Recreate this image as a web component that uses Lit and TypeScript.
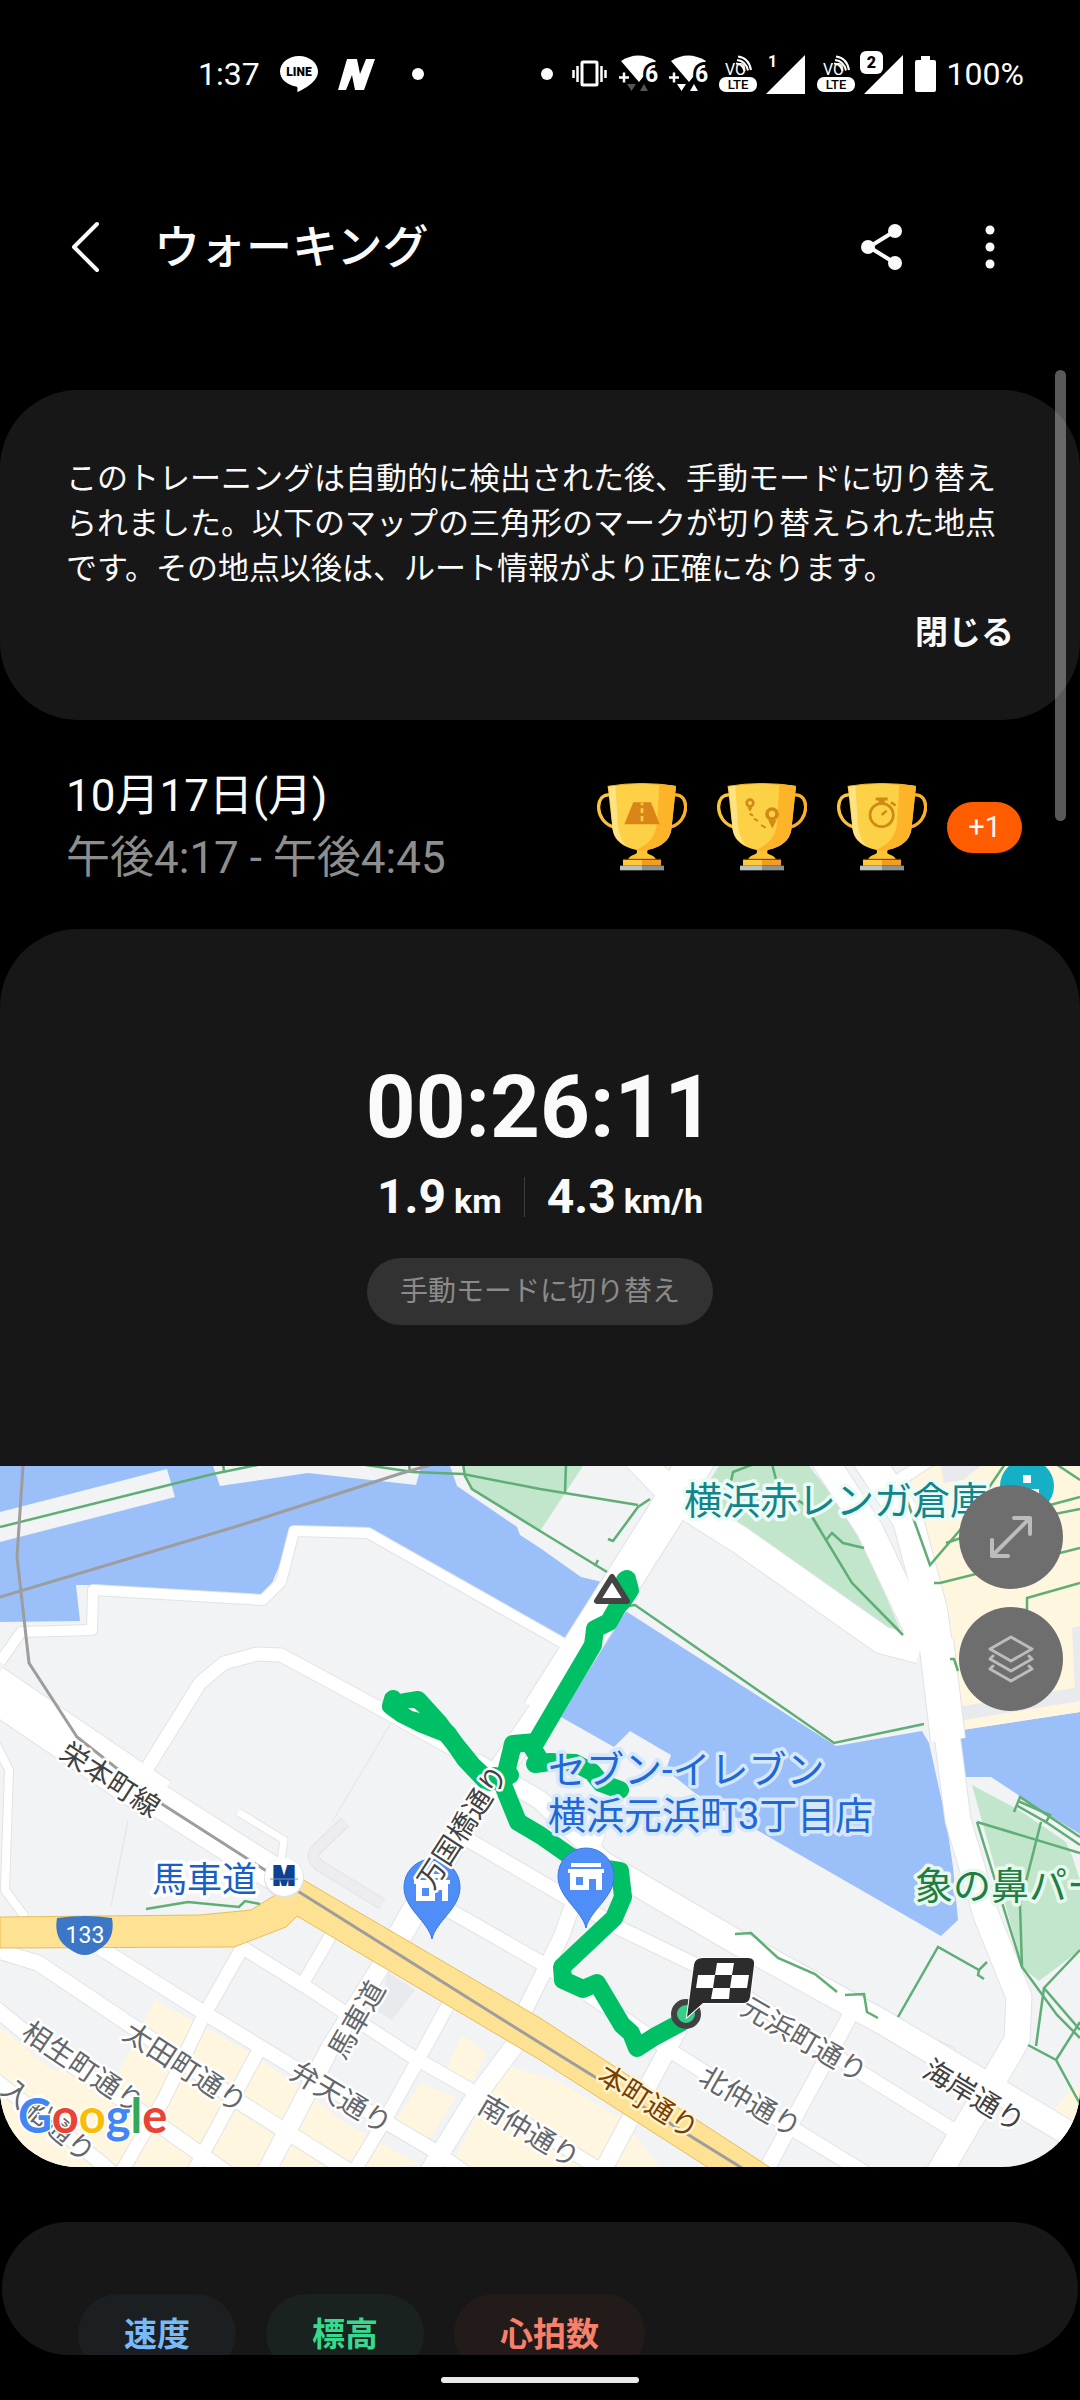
import { LitElement, html, svg, css } from "lit";
import { customElement, property } from "lit/decorators.js";

const JP = css`Roboto, "Noto Sans CJK JP", sans-serif`;

/* ---------- Status bar ---------- */

@customElement("status-bar")
class StatusBar extends LitElement {
  static styles = css`
    :host {
      display: block;
      font-family: ${JP};
      color: #fff;
    }
    .bar {
      display: flex;
      justify-content: space-between;
      align-items: center;
      height: 148px;
      padding: 0 56px 0 198px;
      font-size: 32px;
      line-height: 40px;
    }
    .group {
      display: flex;
      align-items: center;
      gap: 11px;
    }
    .left {
      gap: 20px;
    }
    .dot {
      width: 12px;
      height: 12px;
      border-radius: 50%;
      background: #fff;
      margin: 0 8px;
    }
    .left .dot {
      margin-left: 16px;
    }
    .signal {
      margin-left: -6px;
    }
    svg {
      display: block;
      font-family: Roboto, sans-serif;
    }
  `;

  private wifi(active: boolean) {
    const arrow = active ? "#fff" : "#555";
    return html`<svg width="39" height="38" viewBox="0 0 39 38" aria-hidden="true">
      <path d="M2 6Q19-5 37 6L20 27Z" fill="#fff" />
      <text x="26" y="27" font-size="23" font-weight="700" fill="#fff" stroke="#000" stroke-width="6" paint-order="stroke">6</text>
      <path d="M0 22.500h10M5 17.500v10" stroke="#fff" stroke-width="2.500" />
      <path d="M8 29h9l-4.500 7zM25 29l4 7h-8z" fill="${arrow}" stroke="#000" stroke-width="1" paint-order="stroke" />
    </svg>`;
  }

  private volte() {
    return html`<svg width="38" height="38" viewBox="0 0 38 38" aria-hidden="true">
      <text x="6" y="20" font-size="16" fill="#fff">VO</text>
      <g fill="none" stroke="#fff" stroke-width="2">
        <path d="M17 8.500Q24 9 25.500 16" />
        <path d="M18 5Q27 6 29 15.500" />
        <path d="M19 1.500Q30 3 32 15" />
      </g>
      <rect y="22" width="38" height="15" rx="7" fill="#fff" />
      <text x="19" y="34" font-size="13" font-weight="500" text-anchor="middle">LTE</text>
    </svg>`;
  }

  private signal(sim: number) {
    return html`<svg class="signal" width="44" height="48" viewBox="0 0 44 48" aria-hidden="true">
      <path d="M4 44H43V5Z" fill="#fff" />
      ${sim === 1
        ? svg`<text x="6" y="17" font-size="16" font-weight="700" fill="#fff">1</text>`
        : svg`<rect x="0" y="1" width="23" height="23" rx="6" fill="#fff" stroke="#000" stroke-width="3" paint-order="stroke" />
            <text x="11.500" y="18" font-size="16" font-weight="900" text-anchor="middle">2</text>`}
    </svg>`;
  }

  render() {
    return html`<div class="bar">
      <div class="group left">
        <span>1:37</span>
        <svg width="38" height="38" viewBox="0 0 38 38" aria-hidden="true">
          <path d="M19 1C8.500 1 0 8 0 16.500C0 24 7 30 16 31.500C18.500 32 17 35 17.500 37C24 34 38 27 38 16.500C38 8 29.500 1 19 1Z" fill="#fff" />
          <text x="19" y="21" font-size="12" font-weight="900" text-anchor="middle">LINE</text>
        </svg>
        <svg width="38" height="38" viewBox="0 0 38 38" aria-hidden="true">
          <path d="M9 4H19L22 19L28 4H37L26 35H17L14 20L8 35H0Z" fill="#fff" />
        </svg>
        <span class="dot"></span>
      </div>
      <div class="group">
        <span class="dot"></span>
        <svg width="36" height="28" viewBox="0 0 36 28" aria-hidden="true">
          <rect x="10" y="2" width="15" height="23" rx="1" fill="none" stroke="#fff" stroke-width="3" />
          <path d="M1.500 10v8M5.500 6v16M29.500 6v16M33.500 10v8" stroke="#fff" stroke-width="2.500" />
        </svg>
        ${this.wifi(false)} ${this.wifi(true)} ${this.volte()} ${this.signal(1)} ${this.volte()} ${this.signal(2)}
        <svg width="21" height="38" viewBox="0 0 21 38" aria-hidden="true">
          <path d="M6 1h9v4h4q2 0 2 2v28q0 2-2 2H2q-2 0-2-2V7q0-2 2-2h4z" fill="#fff" />
        </svg>
        <span>100%</span>
      </div>
    </div>`;
  }
}

/* ---------- Trophy ---------- */

const TROPHY_MARKS = {
  road: svg`
    <path d="M217 180H270L296 246H190Z" fill="#d98518" />
    <path d="M243 181v8M243 198v14M243 221v16" stroke="#fdd042" stroke-width="8" />`,
  route: svg`
    <g fill="none" stroke="#d08a17">
      <circle cx="207" cy="182" r="10" stroke-width="8" />
      <path d="M207 206l-5-10h10z" stroke-width="3" fill="#d08a17" />
      <circle cx="273" cy="215" r="15" stroke-width="11" />
      <path d="M274 254l-9-18h18z" stroke-width="4" fill="#d08a17" />
      <path d="M206 214l10 6M219 229l12 7M240 248l14 8" stroke-width="6" />
    </g>`,
  time: svg`
    <g fill="none" stroke="#cf8a15">
      <circle cx="242" cy="218" r="35" stroke-width="8" />
      <path d="M224 170h36" stroke-width="9" />
      <path d="M242 170v14" stroke-width="18" />
      <path d="M270 180l14 9" stroke-width="8" />
      <path d="M242 218l15-13" stroke-width="7" />
    </g>`,
};

@customElement("trophy-icon")
class TrophyIcon extends LitElement {
  @property() mark: keyof typeof TROPHY_MARKS = "road";

  static styles = css`
    :host {
      display: block;
    }
    svg {
      display: block;
    }
  `;

  render() {
    return html`<svg width="90" height="88" viewBox="108 122 270 264" aria-hidden="true">
      <path d="M148 158C101 150 98 236 158 254" fill="none" stroke="#fbc33a" stroke-width="10" />
      <path d="M339 158C386 150 388 236 330 254" fill="none" stroke="#fbb02c" stroke-width="10" />
      <path d="M226 321H262Q254 332 264 336Q280 341 285 351H201Q206 341 222 336Q232 332 226 321Z" fill="#fcc235" />
      <path d="M140 132Q243 115 345 132L331 262Q324 308 262 322Q254 326 243 326Q232 326 224 322Q162 308 155 262Z" fill="#fdd146" />
      <path d="M295 125Q325 127 345 132L331 262Q324 308 262 322Q254 326 243 326Q232 326 226 322Q284 300 288 240Z" fill="#fdb429" />
      <path d="M144 132L163 130L171 250Q176 290 196 311Q160 292 155 262Z" fill="#fee385" />
      <path d="M140 132Q243 115 345 132" fill="none" stroke="#f3b52e" stroke-width="3" />
      <path d="M186 353H243V370H186Z" fill="#fdca3c" />
      <path d="M243 353H300V370H243Z" fill="#f29c24" />
      <path d="M186 351H300" stroke="#8a4d0c" stroke-width="3" />
      <path d="M177 370H243V384H177Z" fill="#b9bfba" />
      <path d="M243 370H309V384H243Z" fill="#8d9190" />
      ${TROPHY_MARKS[this.mark]}
    </svg>`;
  }
}

/* ---------- Route map ---------- */

type Road = [points: string, width: number];

const ROADS: Road[] = [
  ["0,1662 21,1632 92,1630 93,1590 263,1600 281,1582 294,1531 368,1533 575,1650", 10],
  ["143,1775 200,1683 224,1663 257,1654 281,1655 379,1708 480,1764", 13],
  ["475,1762 540,1800 609,1866 733,1938", 18],
  ["600,1862 733,1940 884,2023 1090,2146", 24],
  ["-10,1686 158,1800", 44],
  ["150,1795 290,1884", 32],
  ["-4,1744 9,1770 5,1890 25,1917", 8],
  ["238,1812 284,1840 278,1880", 7],
  ["100,1948 203,2012 293,2067 430,2148 470,2176", 14],
  ["238,1945 306,1987 413,2057 480,2095 620,2182", 13],
  ["-5,1950 38,1963 138,2030 241,2103 360,2178", 15],
  ["-5,2008 28,2035 138,2110 240,2182", 15],
  ["-5,2080 100,2162 120,2180", 14],
  ["241,1950 203,2017 165,2097 118,2178", 13],
  ["331,1935 302,1985", 12],
  ["259,2050 205,2150 190,2178", 13],
  ["452,1998 418,2060 385,2120 350,2178", 13],
  ["520,2038 470,2105 425,2178", 18],
  ["680,2026 602,2172", 17],
  ["852,2012 765,2172", 15],
  ["465,1838 623,1930 702,1968 860,2072 953,2130", 14],
  ["440,1905 545,1965 674,2053 795,2130 870,2176", 14],
  ["598,1832 562,1935 522,2016", 15],
  ["620,1440 680,1502 740,1540 882,1640 920,1650", 27],
  ["893,1484 936,1456", 12],
  ["822,1456 870,1530 922,1640", 26],
  ["866,1456 908,1520 932,1610 945,1700", 30],
  ["936,1640 948,1740", 34],
  ["946,1727 958,1820 986,1915 1019,1997 1017,2040 936,2178", 25],
  ["730,1400 664,1516 540,1712", 36],
  ["548,1700 470,1815 400,1935", 24],
  ["402,1932 330,2048 262,2180", 18],
];

const FOOTPATHS = [
  "0,1527 213,1474 262,1464",
  "223,1464 224,1471",
  "409,1464 410,1472",
  "366,1465 413,1472 463,1474 540,1489 638,1505",
  "650,1499 638,1507 613,1541 608,1539",
  "566,1464 565,1493",
  "463,1464 465,1476 472,1489 540,1531 607,1572",
  "595,1566 598,1560",
  "628,1606 635,1605 834,1743 924,1724",
  "772,1464 778,1487 805,1505 826,1540 852,1583 903,1635",
  "805,1505 820,1530",
  "826,1540 832,1533 843,1543 864,1548",
  "731,1482 733,1472 754,1464",
  "906,1497 915,1523 930,1565 960,1530 1005,1464",
  "934,1583 940,1583 1080,1548",
  "1027,1612 1027,1598 1080,1583",
  "946,1543 1000,1525 1080,1509",
  "1050,1505 1080,1497",
  "1056,1464 1080,1480",
  "950,1659 954,1659 958,1671",
  "735,1934 751,1933 778,1958 815,1974 837,1992",
  "845,1995 864,1994 867,2012 878,2018",
  "898,2017 938,1947 979,1970 987,1962",
  "979,1970 978,1975 984,1979",
  "977,1822 1022,1967 1057,2015 1080,2038",
  "1018,1870 1020,1905 1022,1967",
  "977,1822 1080,1853",
  "1041,1822 1020,1905",
  "1080,1950 1044,1988 1080,2030",
  "1044,1988 1036,2046",
  "1028,2045 1056,2060 1080,2104",
  "1056,2060 1080,2022",
  "1014,1812 1020,1797 1080,1837",
  "1018,1801 1050,1815 1046,1822 1016,1805",
  "1043,1820 1080,1845",
  "146,1909 188,1902 239,1907 245,1901 260,1904",
];

interface StreetLabel {
  text: string;
  x: number;
  y: number;
  angle: number;
  tone?: "dark" | "brown";
}

const STREET_LABELS: StreetLabel[] = [
  { text: "栄本町線", x: 110, y: 1780, angle: 33, tone: "dark" },
  { text: "万国橋通り", x: 463, y: 1827, angle: -57, tone: "dark" },
  { text: "馬車道", x: 357, y: 2020, angle: -60 },
  { text: "相生町通り", x: 83, y: 2068, angle: 34 },
  { text: "太田町通り", x: 185, y: 2068, angle: 33 },
  { text: "弁天通り", x: 341, y: 2098, angle: 31 },
  { text: "南仲通り", x: 529, y: 2132, angle: 31 },
  { text: "入船通り", x: 48, y: 2121, angle: 40 },
  { text: "本町通り", x: 648, y: 2102, angle: 32, tone: "brown" },
  { text: "北仲通り", x: 750, y: 2102, angle: 30 },
  { text: "元浜町通り", x: 804, y: 2040, angle: 30 },
  { text: "海岸通り", x: 974, y: 2096, angle: 31, tone: "dark" },
];

const GOOGLE = [
  ["G", "#4285f4"],
  ["o", "#ea4335"],
  ["o", "#fbbc05"],
  ["g", "#4285f4"],
  ["l", "#34a853"],
  ["e", "#ea4335"],
];

@customElement("route-map")
class RouteMap extends LitElement {
  static styles = css`
    :host {
      display: block;
      position: relative;
    }
    .map {
      display: block;
      width: 100%;
      height: auto;
      background: #f1f3f4;
      font-family: ${JP};
    }
    .water {
      fill: #9bbff9;
    }
    .land {
      fill: #f1f3f4;
    }
    .park {
      fill: #c1e6cb;
    }
    .cream {
      fill: #fef6df;
    }
    .grey {
      fill: #e9eaee;
    }
    .casing,
    .road {
      fill: none;
      stroke: #fff;
      stroke-linejoin: round;
    }
    .casing {
      stroke: #e1e3e6;
    }
    .foot {
      fill: none;
      stroke: #5fae76;
      stroke-width: 2.5;
    }
    .rail {
      fill: none;
      stroke: #9d9d9d;
      stroke-width: 3;
    }
    .route {
      fill: none;
      stroke: #00c065;
      stroke-width: 18;
      stroke-linejoin: round;
      stroke-linecap: round;
    }
    .label {
      font-size: 28px;
      fill: #63676c;
      stroke: #fff;
      stroke-width: 5px;
      stroke-linejoin: round;
      paint-order: stroke;
      text-anchor: middle;
      dominant-baseline: central;
    }
    .dark {
      fill: #414141;
    }
    .brown {
      fill: #793e00;
      stroke: #fff3d0;
    }
    .poi {
      font-size: 38px;
      stroke: #fff;
      stroke-width: 7px;
      stroke-linejoin: round;
      paint-order: stroke;
    }
    .shop {
      fill: #2068d8;
      stroke: #d5e7fb;
    }
    .station {
      font-size: 35px;
      fill: #1b5fc6;
    }
    .sight {
      fill: #12858b;
      stroke: #ecfbf5;
    }
    .garden {
      fill: #1d7f45;
      stroke: #e9f8ee;
    }
    .google {
      font-family: Lato, sans-serif;
      font-weight: 700;
      font-size: 47px;
      stroke: #fff;
      stroke-width: 3px;
      paint-order: stroke;
    }
    .controls {
      position: absolute;
      top: 19px;
      right: 17px;
      display: flex;
      flex-direction: column;
      gap: 18px;
    }
    .control {
      display: grid;
      place-items: center;
      width: 104px;
      height: 104px;
      padding: 0;
      border: 0;
      border-radius: 50%;
      background: #6e6e6e;
      color: #bcbcbc;
    }
  `;

  private pin(x: number, y: number) {
    return svg`<g transform="translate(${x} ${y})">
      <path d="M0 52C-4 34-28 22-28 0A28 28 0 0 1 28 0C28 22 4 34 0 52Z" fill="#4f8ef7" stroke="#3b78e0" stroke-width="1" />
      <path d="M-15-11H15M-18-5H18" stroke="#fff" stroke-width="4" />
      <path d="M-16-5H16V14H10V3H3V14H-16ZM-10 1V9H-3V1Z" fill="#fff" fill-rule="evenodd" />
    </g>`;
  }

  render() {
    return html`
      <svg class="map" viewBox="0 1466 1080 701" role="img" aria-label="ルートマップ">
        <polygon class="water" points="0,1466 450,1466 457,1486 517,1527 520,1535 540,1548 581,1577 602,1582 566,1642 370,1528 296,1526 269,1590 262,1595 93,1585 76,1585 80,1621 0,1622" />
        <polygon class="land" points="0,1512 167,1469 175,1497 0,1542" />
        <polygon class="land" points="213,1466 421,1466 416,1485 308,1473 220,1486" />
        <polygon class="park" points="463,1466 465,1476 472,1489 540,1531 583,1466" />
        <polygon class="water" points="624,1610 836,1746 922,1731 929,1743 946,1820 953,1867 958,1920 941,1936 757,1830 695,1793 666,1770 671,1755 630,1731 614,1747 561,1717" />
        <polygon class="water" points="955,1731 1080,1712 1080,1834 1052,1817 991,1777 955,1777" />
        <polygon class="park" points="972,1785 1019,1810 1066,1842 1072,1856 1080,1880 1080,1950 1039,1981 1023,1968" />
        <polygon class="cream" points="898,1480 925,1466 1080,1466 1080,1712 962,1730 930,1558 905,1500" />
        <polygon class="grey" points="941,1466 981,1466 963,1480 944,1483" />
        <polygon class="grey" points="957,1707 1080,1687 1080,1701 958,1721" />
        <polygon class="grey" points="1072,1628 1080,1626 1080,1690 1075,1690" />
        <polygon class="park" points="719,1466 809,1466 857,1527 903,1637 888,1635 733,1530 690,1510" />
        <polygon class="cream" points="654,1466 681,1466 674,1478" />
        <polygon class="cream" points="0,2027 52,2070 118,2073 130,2050 155,2000 192,2020 250,2053 290,2080 320,2103 400,2167 0,2167" />
        <polygon class="cream" points="462,2035 487,2053 472,2083 446,2070" />
        <polygon class="cream" points="420,2083 456,2097 427,2143 393,2125" />
        <polygon class="cream" points="310,2103 420,2165 290,2167" />
        <polygon class="cream" points="503,2064 560,2082 623,2120 660,2167 450,2167" />
        <polygon class="cream" points="1067,2095 1080,2085 1080,2125 1050,2115" />
        <polygon class="grey" points="388,1972 415,1990 400,2010 392,2020 378,2012" />

        <path class="casing" d="M345 1822L316 1850Q310 1858 320 1866L382 1904" stroke-width="12" />
        <path d="M345 1822L316 1850Q310 1858 320 1866L382 1904" fill="none" stroke="#ededf0" stroke-width="10" />
        <path class="casing" d="M391 1723L332 1822M128 1820L111 1906M913 2038L920 2032L955 2048L954 2060" />

        ${ROADS.map(([p, w]) => svg`<polyline class="casing" points=${p} stroke-width=${w + 2} />`)}
        ${ROADS.map(([p, w]) => svg`<polyline class="road" points=${p} stroke-width=${w} />`)}

        <polygon points="0,1917 200,1915 251,1910 272,1897 300,1878 540,2018 774,2170 712,2170 540,2060 297,1916 286,1927 234,1947 0,1948" fill="#fde293" stroke="#e9bd5a" stroke-width="1" />
        ${FOOTPATHS.map((p) => svg`<polyline class="foot" points=${p} />`)}
        <polyline class="rail" points="23,1466 17,1557 21,1592 29,1663 77,1737 162,1804 296,1890 540,2043 742,2168" />
        <polyline class="rail" points="0,1597 241,1525 399,1474 430,1465" />

        <polyline class="route" points="625,1580 629,1590 618,1606 609,1622 595,1629 593,1645 543,1730 536,1742 513,1744 503,1785 518,1822 540,1835 570,1856 600,1868 620,1871 623,1897 614,1918 562,1967 563,1980 583,1989 597,1983 622,2025 631,2033 637,2048 654,2037 682,2022" />
        <polyline class="route" points="627,1579 630,1590 622,1602" stroke-width="20" />
        <polyline class="route" points="393,1699 391,1706 402,1714 420,1723 448,1734 465,1759 485,1780 495,1776" />
        <polyline class="route" points="394,1704 418,1700 438,1722 450,1738 472,1765 490,1782 510,1775" />
        <polyline class="route" points="530,1744 540,1760 535,1764 550,1762 575,1763 592,1772 601,1783 620,1790" />
        <polygon points="408,1708 414,1708 420,1713 412,1711" fill="#fff" />

        ${this.pin(432, 1887)} ${this.pin(586, 1876)}
        ${STREET_LABELS.map(
          (l) => svg`<text class="label ${l.tone ?? ""}" transform="translate(${l.x} ${l.y}) rotate(${l.angle})">${l.text}</text>`,
        )}

        <circle cx="1027" cy="1486" r="27" fill="#16b0c6" />
        <path d="M1023 1475h8v8h-8zM1013 1489h26v5h-26z" fill="#fff" />
        <text class="poi sight" x="684" y="1514">横浜赤レンガ倉庫</text>
        <text class="poi shop" x="548" y="1783">セブン-イレブン</text>
        <text class="poi shop" x="548" y="1829">横浜元浜町3丁目店</text>
        <text class="poi garden" x="915" y="1899">象の鼻パーク</text>
        <circle cx="284" cy="1878" r="20" fill="#dfe1e4" />
        <circle cx="284" cy="1877" r="19" fill="#fff" />
        <text x="284" y="1885" text-anchor="middle" font-weight="900" font-size="25" fill="#0c4290" stroke="#0c4290" stroke-width="2">M</text>
        <path d="M270 1879h28" stroke="#6c93cc" stroke-width="1" />
        <text class="poi station" x="152" y="1892">馬車道</text>

        <path d="M57 1918Q85 1914 112 1918Q116 1940 98 1950Q85 1960 71 1950Q53 1940 57 1918Z" fill="#3b77c6" />
        <text x="85" y="1943" text-anchor="middle" font-size="23" fill="#fff">133</text>

        <polygon points="612,1577 597,1601 627,1601" fill="#fff" stroke="#444" stroke-width="6" stroke-linejoin="round" />
        <circle cx="686" cy="2014" r="12" fill="#36cf8a" stroke="#424242" stroke-width="6" />
        <path d="M703 1958H748Q755 1958 754 1965L750 1997Q749 2003 743 2003H703L687 2017L694 1965Q695 1958 703 1958Z" fill="#2c2c2c" stroke="#fff" stroke-width="2" paint-order="stroke" />
        <path d="M717 1963H734L732 1975H749L747 1988H730L729 1999H711L713 1988H696L698 1975H715ZM715 1975L713 1988H730L732 1975Z" fill="#fff" fill-rule="evenodd" />

        <text class="google" x="18" y="2133">${GOOGLE.map(([c, fill]) => svg`<tspan fill=${fill}>${c}</tspan>`)}</text>
      </svg>
      <div class="controls">
        <button class="control" aria-label="拡大">
          <svg width="44" height="44" viewBox="0 0 44 44" fill="none" stroke="currentColor" stroke-width="4" stroke-linecap="round" stroke-linejoin="round">
            <path d="M4 40L40 4M25 3H41V19M3 25V41H19" />
          </svg>
        </button>
        <button class="control" aria-label="レイヤー">
          <svg width="48" height="48" viewBox="0 0 48 48" fill="none" stroke="currentColor" stroke-width="3" stroke-linejoin="round" stroke-linecap="round">
            <path d="M24 2L45 14L24 26L3 14Z" />
            <path d="M6 21L3 24L24 36L45 24L42 21M6 31L3 34L24 46L45 34L42 31" />
          </svg>
        </button>
      </div>
    `;
  }
}

/* ---------- Page ---------- */

@customElement("app-root")
class AppRoot extends LitElement {
  static styles = css`
    :host {
      display: flex;
      flex-direction: column;
      position: relative;
      height: 100vh;
      overflow: hidden;
      background: #000;
      color: #fafafa;
      font-family: ${JP};
    }
    * {
      box-sizing: border-box;
    }
    button {
      font: inherit;
      color: inherit;
      border: 0;
      padding: 0;
      background: none;
    }
    svg {
      display: block;
    }
    h1,
    p {
      margin: 0;
      font-weight: inherit;
    }
    .header {
      display: flex;
      align-items: center;
      height: 198px;
      padding: 0 64px 0 60px;
    }
    .icon {
      display: grid;
      place-items: center;
      width: 52px;
      height: 60px;
    }
    .title {
      flex: 1;
      padding-left: 42px;
      font-size: 46px;
      line-height: 60px;
      font-weight: 500;
    }
    .actions {
      display: flex;
      gap: 56px;
    }
    .content {
      display: flex;
      flex: 1;
      flex-direction: column;
      min-height: 0;
      padding-top: 44px;
    }
    .card {
      flex: none;
      border-radius: 78px;
      background: #171717;
      overflow: hidden;
    }
    .notice {
      display: flex;
      flex-direction: column;
      gap: 18px;
      padding: 66px 66px 63px;
      font-size: 31px;
      line-height: 45px;
    }
    .close {
      align-self: flex-end;
      font-size: 33px;
      font-weight: 700;
      line-height: 48px;
    }
    .summary {
      display: flex;
      flex: none;
      justify-content: space-between;
      align-items: center;
      padding: 45px 58px 40px 66px;
      font-size: 44px;
      line-height: 62px;
    }
    .time {
      color: #8e8e8e;
    }
    .awards {
      display: flex;
      align-items: center;
      gap: 20px;
    }
    .trophies {
      display: flex;
      gap: 30px;
    }
    .more {
      padding: 0 21px;
      border-radius: 26px;
      background: #ff5c00;
      font-size: 29px;
      line-height: 51px;
    }
    .result {
      display: flex;
      flex-direction: column;
      align-items: center;
      padding: 126px 0 141px;
      font-weight: 700;
    }
    .duration {
      font-size: 87px;
      line-height: 104px;
    }
    .stats {
      display: flex;
      align-items: center;
      gap: 22px;
      padding: 8px 0 31px;
      font-size: 48px;
      line-height: 60px;
    }
    .stat {
      display: flex;
      align-items: baseline;
      gap: 8px;
    }
    .unit {
      font-size: 34px;
      line-height: 40px;
    }
    .divider {
      width: 1px;
      height: 40px;
      background: #3c3c3c;
    }
    .switch {
      padding: 0 33px;
      border-radius: 34px;
      background: #323232;
      color: #8b8b8b;
      font-size: 28px;
      font-weight: 400;
      line-height: 67px;
    }
    .chart {
      flex: 1 1 0;
      min-height: 0;
      margin: 55px 2px 0;
      padding: 72px 76px 0;
    }
    .chips {
      display: flex;
      gap: 30px;
    }
    .chip {
      padding: 23px 46px 21px;
      border-radius: 40px;
      font-size: 33px;
      font-weight: 700;
      line-height: 36px;
    }
    .speed {
      background: #1b1f22;
      color: #78baf8;
    }
    .altitude {
      background: #19221f;
      color: #37d98e;
    }
    .heart {
      background: #231b1a;
      color: #f8806b;
    }
    .nav {
      display: grid;
      flex: none;
      place-items: center;
      height: 45px;
      padding-top: 5px;
    }
    .handle {
      width: 198px;
      height: 6px;
      border-radius: 3px;
      background: #e9e8eb;
    }
    .scrollbar {
      position: absolute;
      top: 370px;
      right: 14px;
      width: 11px;
      height: 451px;
      border-radius: 6px;
      background: rgba(255, 255, 255, 0.35);
    }
  `;

  render() {
    return html`
      <status-bar></status-bar>
      <header class="header">
        <button class="icon" aria-label="戻る">
          <svg width="30" height="52" viewBox="0 0 30 52" fill="none" stroke="currentColor" stroke-width="4" stroke-linecap="round" stroke-linejoin="round">
            <path d="M26 3L3 26L26 49" />
          </svg>
        </button>
        <h1 class="title">ウォーキング</h1>
        <div class="actions">
          <button class="icon" aria-label="共有">
            <svg width="42" height="46" viewBox="0 0 42 46" fill="currentColor">
              <path d="M34 7L8 23L34 39" fill="none" stroke="currentColor" stroke-width="4" />
              <circle cx="34" cy="7" r="7" />
              <circle cx="7" cy="23" r="7" />
              <circle cx="34" cy="39" r="7" />
            </svg>
          </button>
          <button class="icon" aria-label="その他のオプション">
            <svg width="12" height="46" viewBox="0 0 12 46" fill="currentColor">
              <circle cx="6" cy="6" r="4.500" />
              <circle cx="6" cy="23" r="4.500" />
              <circle cx="6" cy="40" r="4.500" />
            </svg>
          </button>
        </div>
      </header>
      <main class="content">
        <section class="card notice">
          <p>このトレーニングは自動的に検出された後、手動モードに切り替えられました。以下のマップの三角形のマークが切り替えられた地点です。その地点以後は、ルート情報がより正確になります。</p>
          <button class="close">閉じる</button>
        </section>
        <section class="summary">
          <div>
            <p>10月17日(月)</p>
            <p class="time">午後4:17 - 午後4:45</p>
          </div>
          <div class="awards">
            <div class="trophies">
              <trophy-icon mark="road"></trophy-icon>
              <trophy-icon mark="route"></trophy-icon>
              <trophy-icon mark="time"></trophy-icon>
            </div>
            <button class="more">+1</button>
          </div>
        </section>
        <section class="card">
          <div class="result">
            <p class="duration">00:26:11</p>
            <div class="stats">
              <span class="stat">1.9 <span class="unit">km</span></span>
              <span class="divider"></span>
              <span class="stat">4.3 <span class="unit">km/h</span></span>
            </div>
            <button class="switch">手動モードに切り替え</button>
          </div>
          <route-map></route-map>
        </section>
        <section class="card chart">
          <div class="chips">
            <button class="chip speed">速度</button>
            <button class="chip altitude">標高</button>
            <button class="chip heart">心拍数</button>
          </div>
        </section>
      </main>
      <div class="nav"><span class="handle"></span></div>
      <div class="scrollbar"></div>
    `;
  }
}
